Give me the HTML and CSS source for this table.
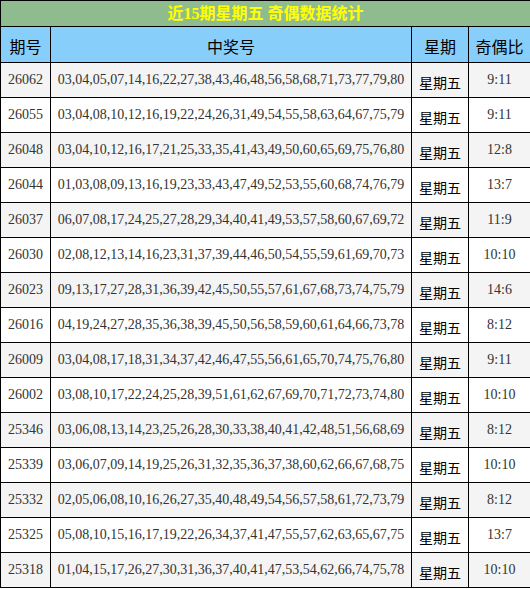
FILE: index.html
```html
<!DOCTYPE html>
<html lang="zh">
<head>
<meta charset="utf-8">
<link rel="stylesheet" href="styles.css">
</head>
<body>
<table class="stats">
  <colgroup>
    <col class="c-issue"><col class="c-nums"><col class="c-day"><col class="c-ratio">
  </colgroup>
  <thead>
    <tr class="title-row"><th colspan="4">近15期星期五 奇偶数据统计</th></tr>
    <tr class="head-row"><th>期号</th><th>中奖号</th><th>星期</th><th>奇偶比</th></tr>
  </thead>
  <tbody>
    <tr><td>26062</td><td>03,04,05,07,14,16,22,27,38,43,46,48,56,58,68,71,73,77,79,80</td><td class="day">星期五</td><td>9:11</td></tr>
    <tr><td>26055</td><td>03,04,08,10,12,16,19,22,24,26,31,49,54,55,58,63,64,67,75,79</td><td class="day">星期五</td><td>9:11</td></tr>
    <tr><td>26048</td><td>03,04,10,12,16,17,21,25,33,35,41,43,49,50,60,65,69,75,76,80</td><td class="day">星期五</td><td>12:8</td></tr>
    <tr><td>26044</td><td>01,03,08,09,13,16,19,23,33,43,47,49,52,53,55,60,68,74,76,79</td><td class="day">星期五</td><td>13:7</td></tr>
    <tr><td>26037</td><td>06,07,08,17,24,25,27,28,29,34,40,41,49,53,57,58,60,67,69,72</td><td class="day">星期五</td><td>11:9</td></tr>
    <tr><td>26030</td><td>02,08,12,13,14,16,23,31,37,39,44,46,50,54,55,59,61,69,70,73</td><td class="day">星期五</td><td>10:10</td></tr>
    <tr><td>26023</td><td>09,13,17,27,28,31,36,39,42,45,50,55,57,61,67,68,73,74,75,79</td><td class="day">星期五</td><td>14:6</td></tr>
    <tr><td>26016</td><td>04,19,24,27,28,35,36,38,39,45,50,56,58,59,60,61,64,66,73,78</td><td class="day">星期五</td><td>8:12</td></tr>
    <tr><td>26009</td><td>03,04,08,17,18,31,34,37,42,46,47,55,56,61,65,70,74,75,76,80</td><td class="day">星期五</td><td>9:11</td></tr>
    <tr><td>26002</td><td>03,08,10,17,22,24,25,28,39,51,61,62,67,69,70,71,72,73,74,80</td><td class="day">星期五</td><td>10:10</td></tr>
    <tr><td>25346</td><td>03,06,08,13,14,23,25,26,28,30,33,38,40,41,42,48,51,56,68,69</td><td class="day">星期五</td><td>8:12</td></tr>
    <tr><td>25339</td><td>03,06,07,09,14,19,25,26,31,32,35,36,37,38,60,62,66,67,68,75</td><td class="day">星期五</td><td>10:10</td></tr>
    <tr><td>25332</td><td>02,05,06,08,10,16,26,27,35,40,48,49,54,56,57,58,61,72,73,79</td><td class="day">星期五</td><td>8:12</td></tr>
    <tr><td>25325</td><td>05,08,10,15,16,17,19,22,26,34,37,41,47,55,57,62,63,65,67,75</td><td class="day">星期五</td><td>13:7</td></tr>
    <tr><td>25318</td><td>01,04,15,17,26,27,30,31,36,37,40,41,47,53,54,62,66,74,75,78</td><td class="day">星期五</td><td>10:10</td></tr>
  </tbody>
</table>
</body>
</html>
```
FILE: styles.css
```css
html, body {
  margin: 0;
  padding: 0;
  background: #ffffff;
}

.stats {
  border-collapse: collapse;
  table-layout: fixed;
  width: 530px;
  font-family: "Liberation Serif", "Noto Sans CJK SC", serif;
  font-size: 14px;
  color: #333333;
}

.c-issue { width: 50px; }
.c-nums { width: 361px; }
.c-day { width: 57px; }
.c-ratio { width: 62px; }

.stats th,
.stats td {
  border: 1px solid #000000;
  padding: 0;
  text-align: center;
  vertical-align: middle;
  white-space: nowrap;
  overflow: hidden;
}

.title-row th {
  background: #8fbc8f;
  color: #ffff00;
  font-size: 16px;
  font-weight: bold;
  height: 25px;
  line-height: 20px;
}

.head-row th {
  background: #87cefa;
  color: #000000;
  font-family: "Noto Sans CJK SC", sans-serif;
  font-weight: normal;
  font-size: 16px;
  height: 32px;
  padding-top: 3px;
  line-height: 20px;
}

.stats tbody td {
  height: 34px;
  line-height: 18px;
}

.stats tbody tr:nth-child(odd) td {
  background: #f4f4f4;
}

.stats tbody tr:nth-child(even) td {
  background: #ffffff;
}

.stats tbody td.day {
  font-family: "Noto Sans CJK SC", sans-serif;
  color: #000000;
  height: 31px;
  padding-top: 3px;
}
```
